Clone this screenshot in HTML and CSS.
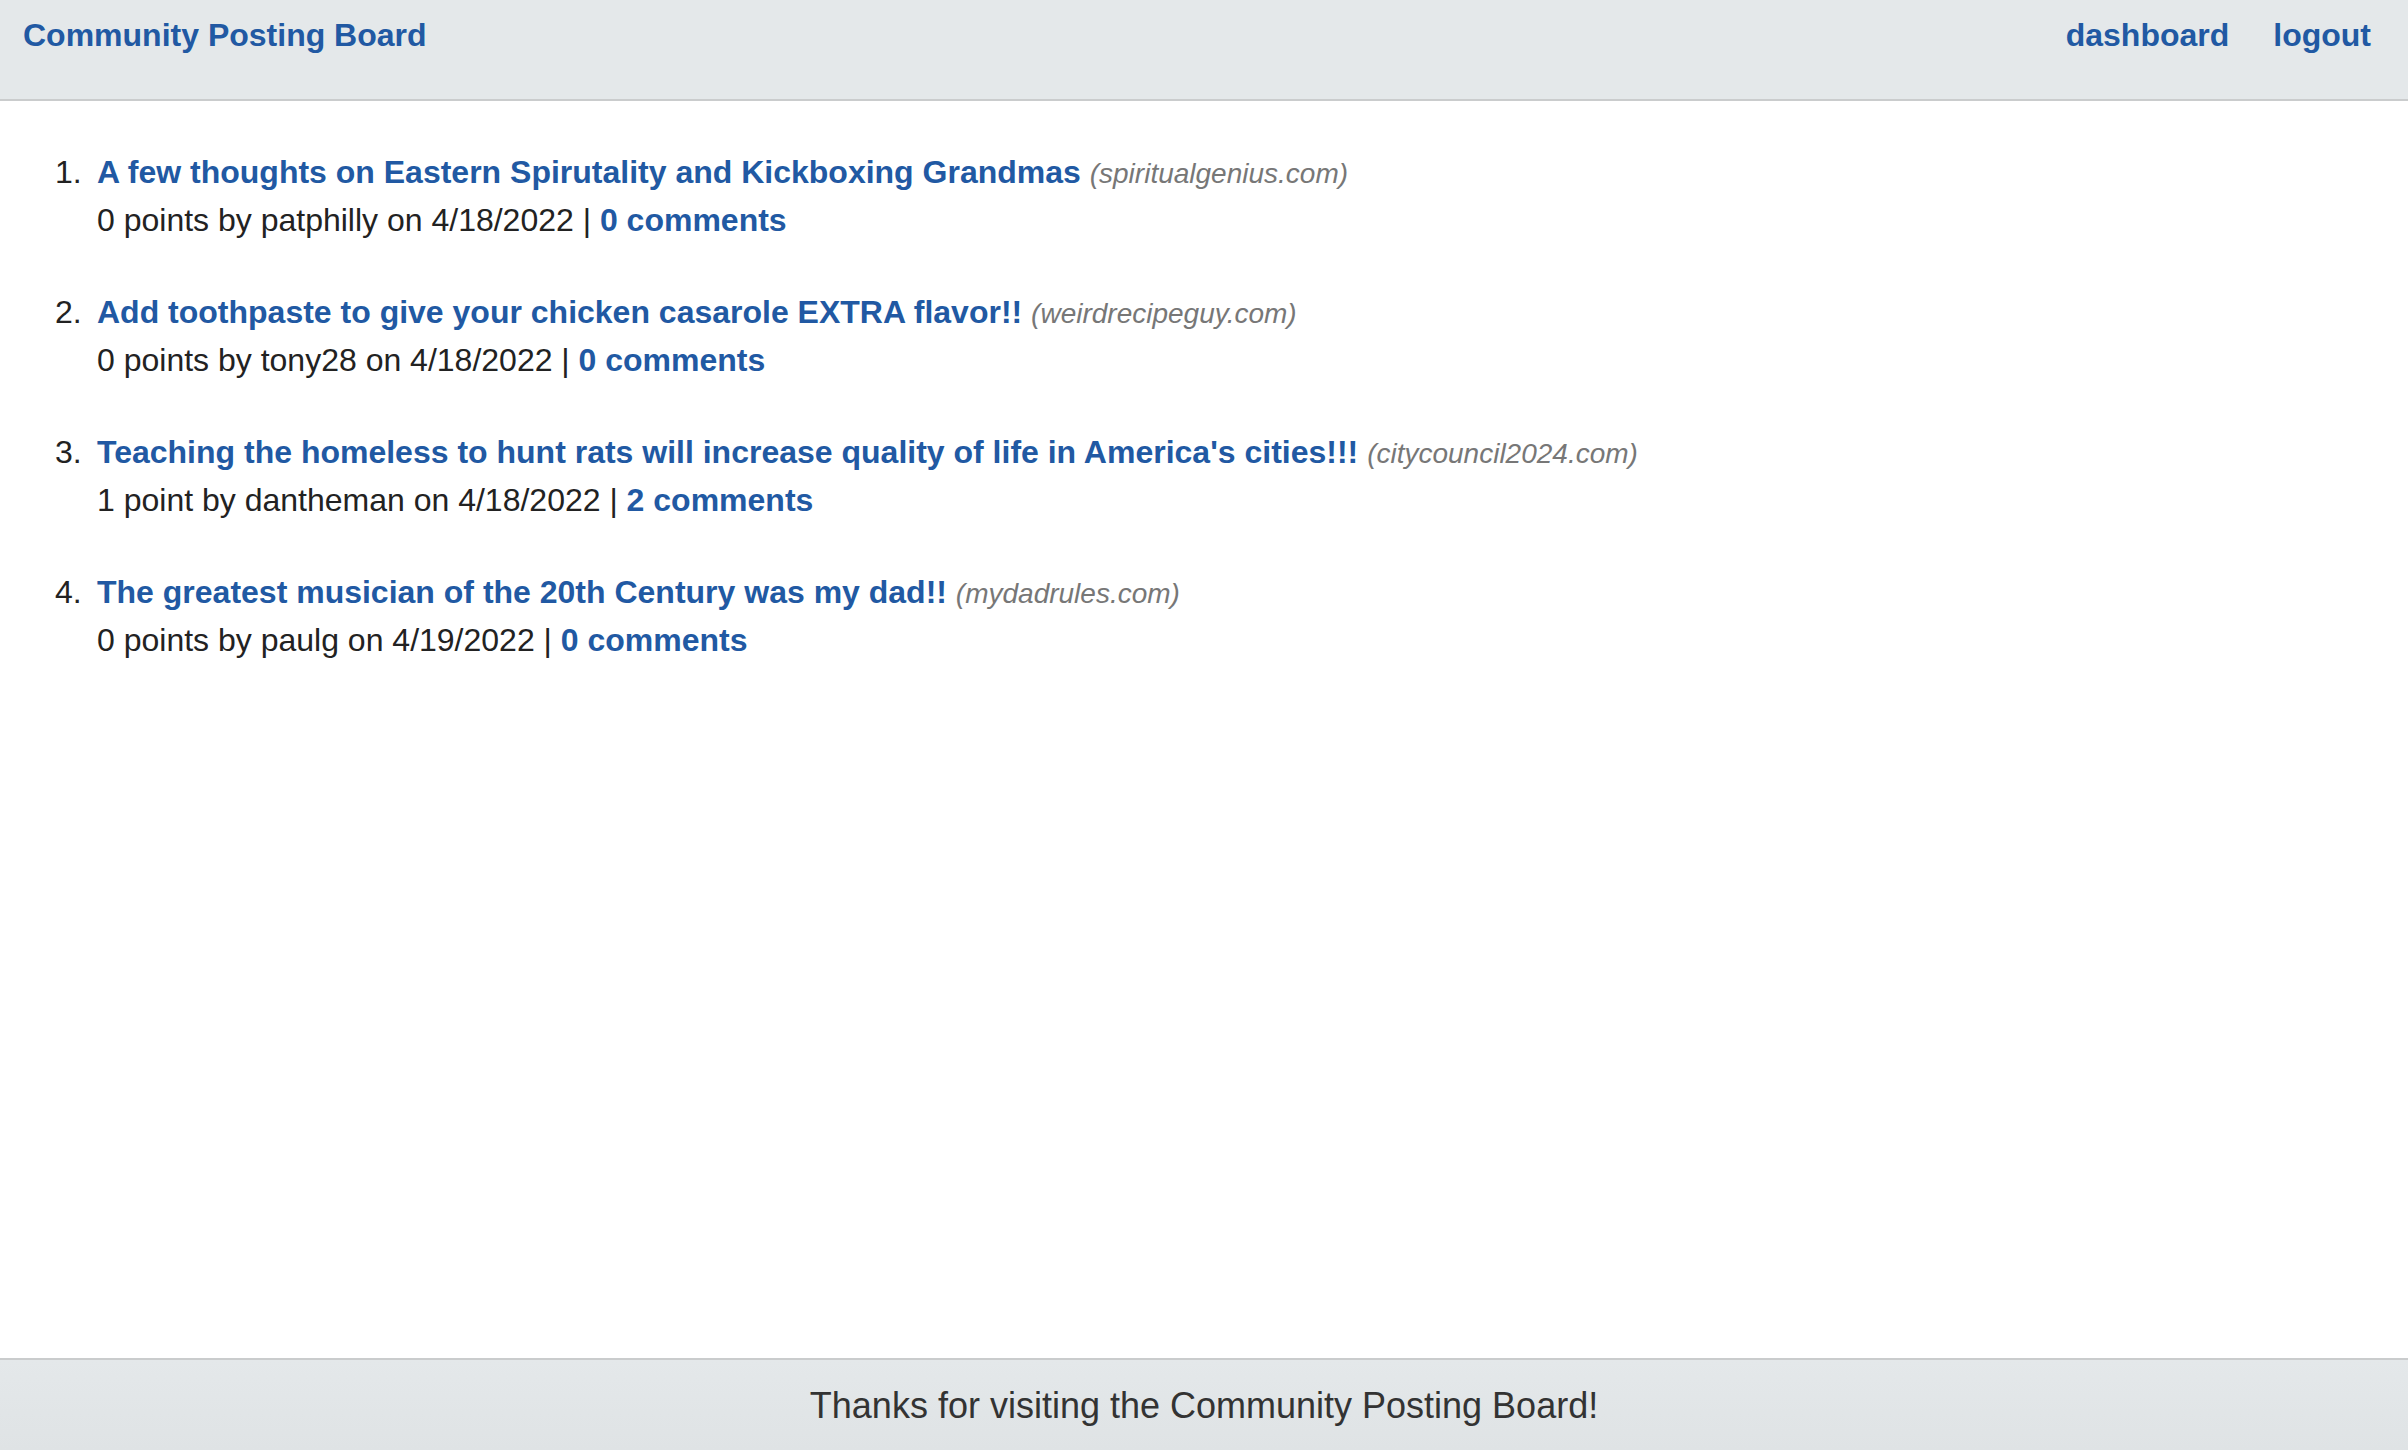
FILE: index.html
```html
<!DOCTYPE html>
<html lang="en">
<head>
<meta charset="utf-8">
<title>Community Posting Board</title>
<link rel="stylesheet" href="styles.css">
</head>
<body>
<header class="topbar">
  <a class="brand" href="#">Community Posting Board</a>
  <nav class="nav">
    <a href="#">dashboard</a>
    <a href="#">logout</a>
  </nav>
</header>
<main class="content">
  <ol class="posts">
    <li class="post">
      <div class="post-title"><a href="#">A few thoughts on Eastern Spirutality and Kickboxing Grandmas</a> <span class="domain">(spiritualgenius.com)</span></div>
      <div class="post-meta">0 points by patphilly on 4/18/2022 | <a href="#">0 comments</a></div>
    </li>
    <li class="post">
      <div class="post-title"><a href="#">Add toothpaste to give your chicken casarole EXTRA flavor!!</a> <span class="domain">(weirdrecipeguy.com)</span></div>
      <div class="post-meta">0 points by tony28 on 4/18/2022 | <a href="#">0 comments</a></div>
    </li>
    <li class="post">
      <div class="post-title"><a href="#">Teaching the homeless to hunt rats will increase quality of life in America's cities!!!</a> <span class="domain">(citycouncil2024.com)</span></div>
      <div class="post-meta">1 point by dantheman on 4/18/2022 | <a href="#">2 comments</a></div>
    </li>
    <li class="post">
      <div class="post-title"><a href="#">The greatest musician of the 20th Century was my dad!!</a> <span class="domain">(mydadrules.com)</span></div>
      <div class="post-meta">0 points by paulg on 4/19/2022 | <a href="#">0 comments</a></div>
    </li>
  </ol>
</main>
<footer class="footer">Thanks for visiting the Community Posting Board!</footer>
</body>
</html>
```

FILE: styles.css
```css
* { box-sizing: border-box; }

html, body {
  margin: 0;
  padding: 0;
}

body {
  font-family: "Liberation Sans", Arial, Helvetica, sans-serif;
  color: #222;
  background: #fff;
  min-height: 100vh;
  display: flex;
  flex-direction: column;
}

a {
  color: #2159a3;
  font-weight: bold;
  text-decoration: none;
}

.topbar {
  height: 101px;
  background: #e4e8ea;
  border-bottom: 2px solid #cacccd;
  display: flex;
  justify-content: space-between;
  align-items: flex-start;
  padding: 15px 37px 0 23px;
}

.brand {
  font-size: 32px;
  line-height: 40px;
}

.nav {
  display: flex;
  gap: 44px;
  font-size: 32px;
  line-height: 40px;
}

.content {
  flex: 1;
}

.posts {
  margin: 47px 0 0 0;
  padding: 0 0 0 97px;
  font-size: 32px;
  line-height: 48px;
  color: #222;
}

.post {
  margin-bottom: 44px;
}

.post::marker {
  content: counter(list-item) ".\00a0\2009";
  color: #222;
}

.post-title,
.post-meta {
  height: 48px;
}

.domain {
  font-size: 28px;
  line-height: 1;
  font-style: italic;
  color: #777;
}

.footer {
  background: linear-gradient(#e4e8ea, #dfe3e5);
  border-top: 2px solid #cacccd;
  height: 92px;
  padding-top: 25px;
  text-align: center;
  font-size: 36px;
  line-height: 42px;
  color: #333;
}
```
